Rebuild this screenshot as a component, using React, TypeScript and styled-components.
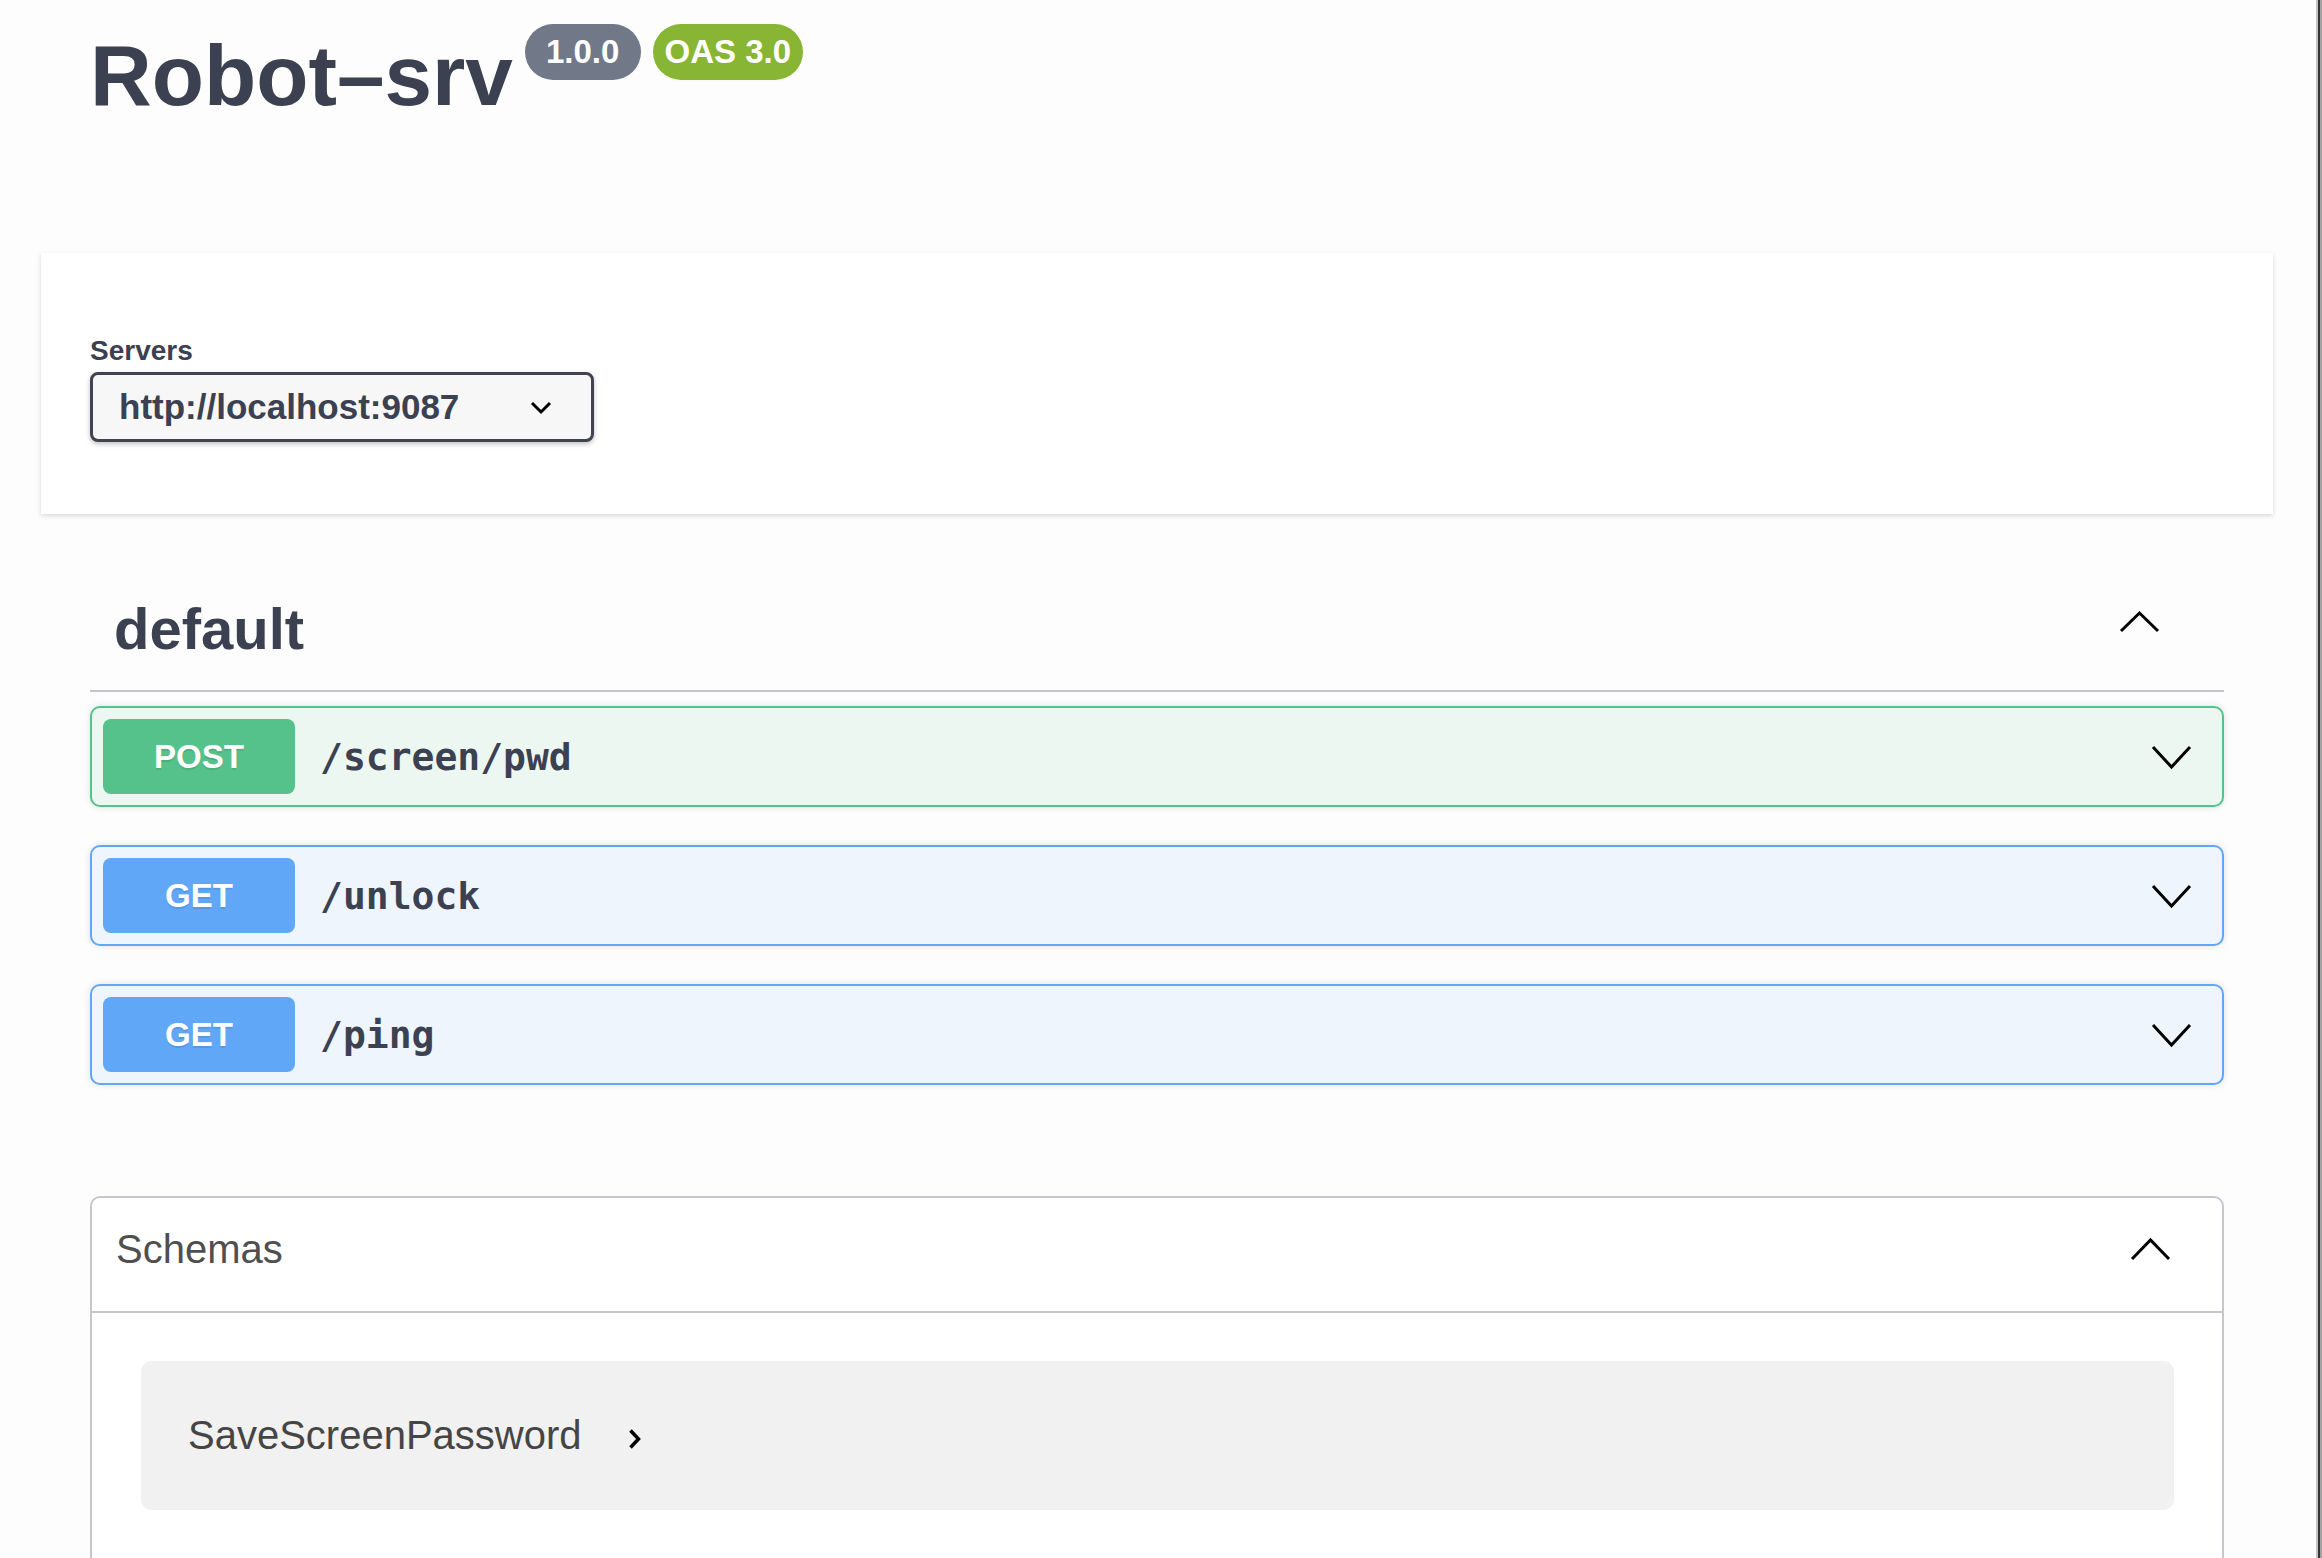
import styled, { createGlobalStyle } from "styled-components";

const GlobalStyle = createGlobalStyle`
  html, body {
    margin: 0;
    padding: 0;
    background: #fdfdfd;
  }
  body {
    font-family: "Liberation Sans", Arial, sans-serif;
    color: #3b4151;
  }
`;

type Method = "post" | "get";

const methodColors: Record<Method, { main: string; bg: string }> = {
  post: { main: "#55c28b", bg: "#edf7f1" },
  get: { main: "#61a7f8", bg: "#eef5fd" },
};

const Page = styled.div`
  display: flex;
  min-height: 1558px;
`;

const Main = styled.main`
  flex: 1;
  min-width: 0;
  padding: 0 43px 0 41px;
`;

// the dark frame line on the right side of the window
const WindowEdge = styled.div`
  width: 6px;
  flex-shrink: 0;
  background: linear-gradient(
    to right,
    #c4c4c4 0 2px,
    #363636 2px 4px,
    #a3a3a3 4px 6px
  );
`;

const Info = styled.header`
  display: flex;
  align-items: flex-start;
  padding: 24px 49px 0;
  margin-bottom: 128px;
`;

const Title = styled.h2`
  margin: 3px 0 0;
  font-size: 85.5px;
  font-weight: 700;
  line-height: normal;
  color: #3b4151;
`;

const Stamp = styled.small<{ $tone: "version" | "oas" }>`
  display: inline-flex;
  align-items: center;
  height: 56px;
  padding: 0 12px;
  margin-left: 12px;
  border-radius: 57px;
  background: ${(p) => (p.$tone === "oas" ? "#89b535" : "#717888")};
  color: #fff;
  font-size: 33px;
  font-weight: 700;
  white-space: pre;
`;

const SchemeBox = styled.section`
  background: #fff;
  box-shadow: 0 2px 5px rgba(0, 0, 0, 0.15);
  padding: 82px 49px 72px;
`;

const ServersTitle = styled.div`
  font-size: 28px;
  font-weight: 700;
  line-height: 32px;
  color: #3b4151;
`;

const Select = styled.div`
  margin-top: 5px;
  width: 504px;
  height: 70px;
  box-sizing: border-box;
  display: flex;
  align-items: center;
  justify-content: space-between;
  padding: 0 38px 0 26px;
  border: 3px solid #41444e;
  border-radius: 8px;
  background: #f7f7f7;
  box-shadow: 0 2px 5px rgba(0, 0, 0, 0.25);
  font-size: 35px;
  font-weight: 700;
  color: #3b4151;
`;

const TagSection = styled.section`
  padding: 0 49px;
  margin-top: 61px;
`;

const TagHeader = styled.div`
  display: flex;
  align-items: flex-start;
  padding: 20px 63px 28px 24px;
  border-bottom: 2px solid #c4c6cb;
  margin-bottom: 14px;
`;

const TagName = styled.h3`
  flex: 1;
  margin: 0;
  font-size: 58px;
  font-weight: 700;
  line-height: 67px;
  color: #3b4151;
`;

const CaretSlot = styled.span<{ $top: number }>`
  display: flex;
  margin-top: ${(p) => p.$top}px;
`;

const OpList = styled.div`
  display: flex;
  flex-direction: column;
  gap: 38px;
`;

const Opblock = styled.div<{ $method: Method }>`
  display: flex;
  align-items: center;
  height: 101px;
  box-sizing: border-box;
  padding: 0 29px 0 11px;
  border: 2px solid ${(p) => methodColors[p.$method].main};
  border-radius: 10px;
  background: ${(p) => methodColors[p.$method].bg};
  box-shadow: 0 0 7px rgba(0, 0, 0, 0.12);
`;

const MethodBadge = styled.span<{ $method: Method }>`
  display: flex;
  align-items: center;
  justify-content: center;
  width: 192px;
  height: 75px;
  flex-shrink: 0;
  border-radius: 8px;
  background: ${(p) => methodColors[p.$method].main};
  color: #fff;
  font-size: 33px;
  font-weight: 700;
  text-shadow: 0 2px 0 rgba(0, 0, 0, 0.1);
`;

const PathText = styled.span`
  flex: 1;
  margin-left: 25px;
  font-family: "DejaVu Sans Mono", "Liberation Mono", monospace;
  font-size: 38px;
  font-weight: 700;
  color: #3b4151;
`;

const Models = styled.section`
  margin: 111px 49px 0;
  border: 2px solid #c6c7cc;
  border-bottom: none;
  border-radius: 10px 10px 0 0;
  background: #fff;
  padding-bottom: 80px;
`;

const ModelsHeader = styled.div`
  display: flex;
  align-items: center;
  height: 115px;
  box-sizing: border-box;
  padding: 0 50px 10px 24px;
  border-bottom: 2px solid #c6c7cc;
`;

const ModelsTitle = styled.h4`
  flex: 1;
  margin: 0;
  font-size: 40px;
  font-weight: 400;
  color: #4f4f4f;
`;

const ModelsBody = styled.div`
  padding: 48px 48px 0 49px;
`;

const ModelCard = styled.div`
  display: flex;
  align-items: center;
  gap: 45px;
  height: 149px;
  box-sizing: border-box;
  padding: 0 47px;
  border-radius: 10px;
  background: #f1f1f1;
`;

const ModelName = styled.span`
  font-size: 40px;
  color: #454545;
`;

const ArrowSlot = styled.span`
  display: flex;
  margin-top: 6px;
`;

type Dir = "up" | "down" | "right";

const Chevron = ({
  dir,
  w,
  h,
  stroke = 3,
}: {
  dir: Dir;
  w: number;
  h: number;
  stroke?: number;
}) => {
  const s = stroke;
  const points =
    dir === "down"
      ? `${s} ${s} ${w / 2} ${h - s} ${w - s} ${s}`
      : dir === "up"
      ? `${s} ${h - s} ${w / 2} ${s} ${w - s} ${h - s}`
      : `${s} ${s} ${w - s} ${h / 2} ${s} ${h - s}`;
  return (
    <svg width={w} height={h} viewBox={`0 0 ${w} ${h}`}>
      <polyline
        points={points}
        fill="none"
        stroke="#000"
        strokeWidth={stroke}
        strokeLinejoin="miter"
      />
    </svg>
  );
};

const operations: { method: Method; path: string }[] = [
  { method: "post", path: "/screen/pwd" },
  { method: "get", path: "/unlock" },
  { method: "get", path: "/ping" },
];

const App = () => {
  return (
    <Page>
      <GlobalStyle />
      <Main>
        <Info>
          <Title>Robot–srv</Title>
          <Stamp $tone="version">{" 1.0.0 "}</Stamp>
          <Stamp $tone="oas">OAS 3.0</Stamp>
        </Info>

        <SchemeBox>
          <ServersTitle>Servers</ServersTitle>
          <Select>
            http://localhost:9087
            <Chevron dir="down" w={24} h={15} stroke={3} />
          </Select>
        </SchemeBox>

        <TagSection>
          <TagHeader>
            <TagName>default</TagName>
            <CaretSlot $top={15}>
              <Chevron dir="up" w={43} h={24} />
            </CaretSlot>
          </TagHeader>
          <OpList>
            {operations.map((op) => (
              <Opblock key={op.path} $method={op.method}>
                <MethodBadge $method={op.method}>
                  {op.method.toUpperCase()}
                </MethodBadge>
                <PathText>{op.path}</PathText>
                <Chevron dir="down" w={43} h={26} />
              </Opblock>
            ))}
          </OpList>
        </TagSection>

        <Models>
          <ModelsHeader>
            <ModelsTitle>Schemas</ModelsTitle>
            <Chevron dir="up" w={43} h={25} />
          </ModelsHeader>
          <ModelsBody>
            <ModelCard>
              <ModelName>SaveScreenPassword</ModelName>
              <ArrowSlot>
                <Chevron dir="right" w={15} h={24} stroke={3.5} />
              </ArrowSlot>
            </ModelCard>
          </ModelsBody>
        </Models>
      </Main>
      <WindowEdge />
    </Page>
  );
};

export default App;
